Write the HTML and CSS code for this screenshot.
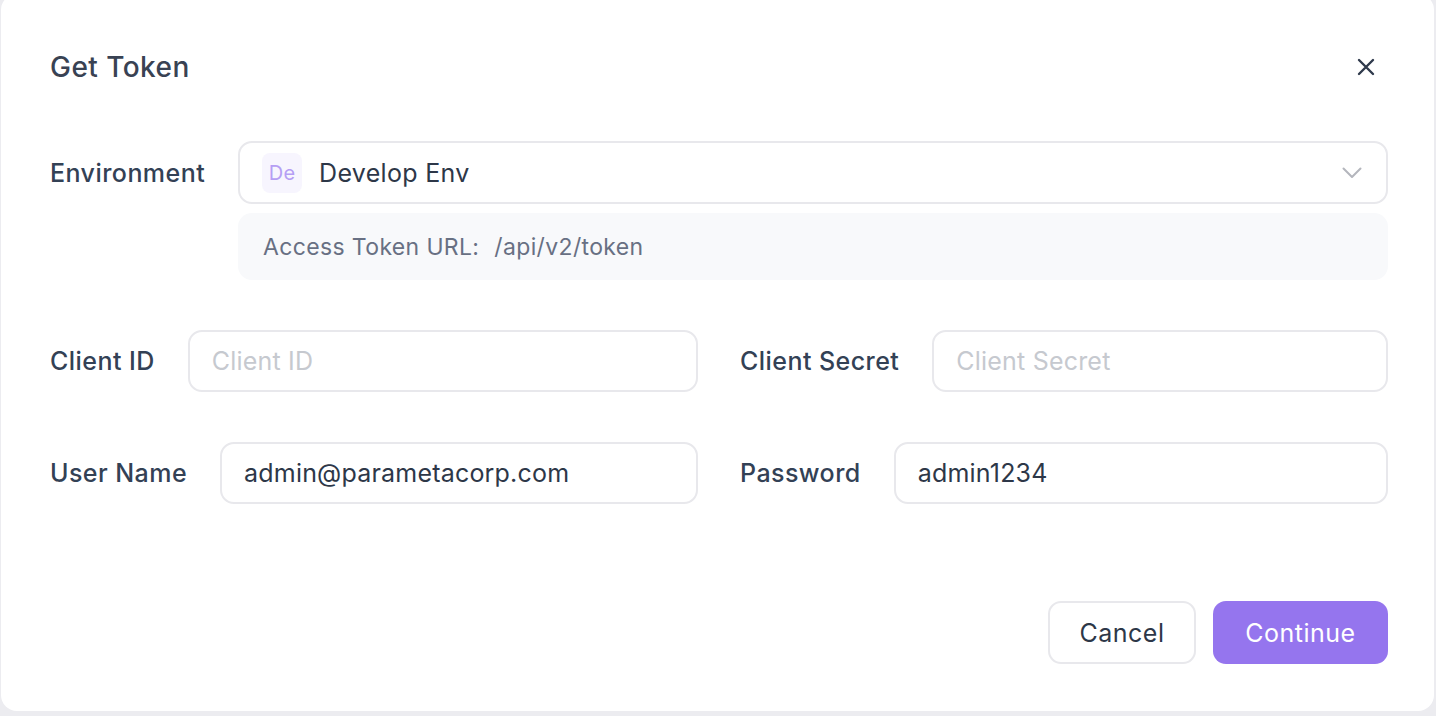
FILE: index.html
```html
<!DOCTYPE html>
<html>
<head>
<meta charset="utf-8">
<link rel="stylesheet" href="styles.css">
</head>
<body>
<div class="modal">
  <div class="header">
    <h1 class="title">Get Token</h1>
    <button class="close" aria-label="Close">
      <svg width="18" height="18" viewBox="0 0 18 18"><path d="M2 2L16 16M16 2L2 16" stroke="#2f3a4c" stroke-width="2.4" stroke-linecap="round"/></svg>
    </button>
  </div>
  <div class="env-row">
    <div class="label env-label">Environment</div>
    <div class="env-body">
      <div class="select">
        <span class="badge">De</span>
        <span class="select-text">Develop Env</span>
        <svg class="chev" width="20" height="12" viewBox="0 0 20 12"><path d="M1.5 1.5L10 10L18.5 1.5" fill="none" stroke="#b4b6bd" stroke-width="2" stroke-linecap="round" stroke-linejoin="round"/></svg>
      </div>
      <div class="url-box"><span>Access Token URL:</span><span class="url-value">/api/v2/token</span></div>
    </div>
  </div>
  <div class="grid">
    <div class="field">
      <div class="label">Client ID</div>
      <div class="input placeholder">Client ID</div>
    </div>
    <div class="field">
      <div class="label">Client Secret</div>
      <div class="input placeholder">Client Secret</div>
    </div>
    <div class="field">
      <div class="label">User Name</div>
      <div class="input">admin@parametacorp.com</div>
    </div>
    <div class="field">
      <div class="label">Password</div>
      <div class="input">admin1234</div>
    </div>
  </div>
  <div class="footer">
    <button class="btn btn-cancel">Cancel</button>
    <button class="btn btn-primary">Continue</button>
  </div>
</div>
</body>
</html>
```

FILE: styles.css
```css
* { box-sizing: border-box; }
html, body { margin: 0; padding: 0; }
body {
  background: #ececf0;
  font-family: Inter, "Noto Sans", sans-serif;
  width: 1436px;
  height: 716px;
  overflow: hidden;
}
.modal {
  margin: -6px 2px 0 1px;
  height: 717px;
  background: #ffffff;
  border-radius: 16px;
  padding: 50px 46px 0 49px;
}
.header {
  display: flex;
  align-items: center;
  justify-content: space-between;
  height: 46px;
}
.title {
  margin: 0;
  font-size: 28px;
  font-weight: 500;
  color: #394253;
  letter-spacing: 0.45px;
}
.close {
  border: 0;
  background: none;
  padding: 0;
  width: 18px;
  height: 18px;
  margin-right: 13px;
  display: flex;
}
.label {
  font-size: 25px;
  font-weight: 500;
  color: #334155;
  letter-spacing: 0.45px;
  white-space: nowrap;
}
.env-row {
  display: flex;
  margin-top: 51px;
  gap: 33px;
}
.env-label {
  height: 63px;
  display: flex;
  align-items: center;
}
.env-body {
  flex: 1;
  display: flex;
  flex-direction: column;
  gap: 9px;
}
.select {
  height: 63px;
  border: 2px solid #e8e8ec;
  border-radius: 14px;
  display: flex;
  align-items: center;
  padding: 0 24px 0 22px;
}
.badge {
  width: 40px;
  height: 40px;
  border-radius: 8px;
  background: #f7f5fe;
  color: #b59ef4;
  font-size: 20px;
  letter-spacing: 0.3px;
  display: flex;
  align-items: center;
  justify-content: center;
}
.select-text {
  margin-left: 17px;
  font-size: 25px;
  letter-spacing: 0.3px;
  color: #2d3748;
  flex: 1;
}
.url-box {
  height: 67px;
  background: #f8f9fb;
  border-radius: 14px;
  display: flex;
  align-items: center;
  padding-left: 25px;
  font-size: 23px;
  letter-spacing: 0.35px;
  color: #687083;
}
.url-value { margin-left: 15px; }
.grid {
  display: grid;
  grid-template-columns: 1fr 1fr;
  column-gap: 42px;
  row-gap: 50px;
  margin-top: 50px;
}
.field {
  display: flex;
  align-items: center;
  gap: 33px;
}
.input {
  flex: 1;
  height: 62px;
  border: 2px solid #e8e8ec;
  border-radius: 14px;
  display: flex;
  align-items: center;
  padding-left: 22px;
  font-size: 25px;
  letter-spacing: 0.2px;
  color: #2d3748;
}
.input.placeholder { color: #c6c9cf; }
.footer {
  display: flex;
  justify-content: flex-end;
  gap: 17px;
  margin-top: 97px;
}
.btn {
  height: 63px;
  border-radius: 13px;
  font-family: Inter, "Noto Sans", sans-serif;
  font-size: 25px;
  letter-spacing: 0.5px;
  padding: 0;
}
.btn-cancel {
  width: 148px;
  background: #fff;
  border: 2px solid #e8e8ec;
  color: #2d3748;
}
.btn-primary {
  width: 175px;
  background: #9575ee;
  border: 0;
  color: #ffffff;
}
```
